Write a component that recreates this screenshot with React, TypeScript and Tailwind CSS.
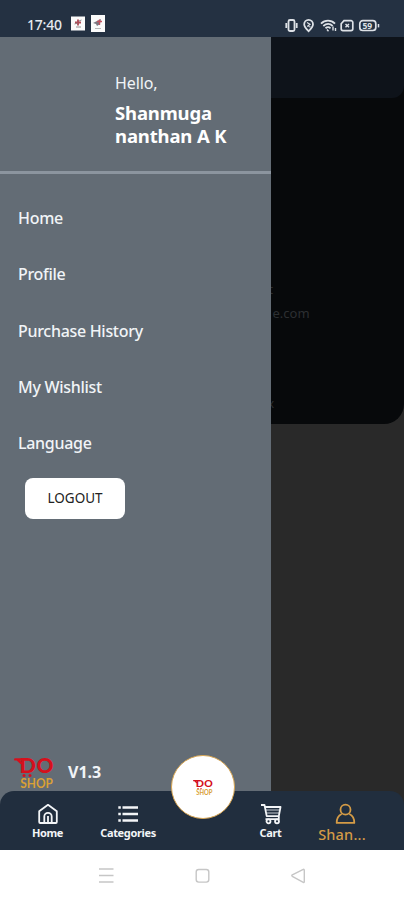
import type { ReactNode } from "react";

const menuItems = ["Home", "Profile", "Purchase History", "My Wishlist", "Language"];

function DoShopLogo({ className }: { className: string }) {
  return (
    <svg viewBox="0 0 40 34" className={`overflow-visible ${className}`} fontFamily="Lato, sans-serif">
      <path d="M1.2 3.4h12M3.5 3.6l3.5 3.4" stroke="#d5101c" strokeWidth="2.4" fill="none" strokeLinecap="round" />
      <text y="16.5" fontSize="20" fontWeight="900" fill="#d5101c">
        <tspan x="5.5" textLength="16.5" lengthAdjust="spacingAndGlyphs">
          D
        </tspan>
        <tspan x="22.5" textLength="17" lengthAdjust="spacingAndGlyphs">
          O
        </tspan>
      </text>
      <circle cx="10" cy="19.5" r="1.5" fill="#d5101c" />
      <circle cx="16" cy="19.5" r="1.5" fill="#d5101c" />
      <text x="6.3" y="31.5" fontSize="13.5" fontWeight="700" fill="#d9a036" textLength="32.5" lengthAdjust="spacingAndGlyphs">
        SHOP
      </text>
    </svg>
  );
}

function StatusBar() {
  return (
    <header className="flex h-[37px] shrink-0 items-end bg-[#243142] pr-6 pb-[3px] pl-[27px] text-[#e6eaf0]">
      <span className="w-[44px] text-[14px] leading-[18px] font-medium tracking-[-0.2px]">17:40</span>
      <svg width="35" height="19" viewBox="0 0 35 19">
        <rect x="0" y="1.5" width="14" height="14" fill="#fbfbfb" />
        <path d="M4 7.5h6M7 4.5v6" stroke="#ad4b57" strokeWidth="1.8" />
        <path d="M3.5 9l3-1M8 6l2.5-1M5 12h5" stroke="#777" strokeWidth="0.8" />
        <rect x="20" y="0" width="14" height="17" fill="#fbfbfb" />
        <path d="M22 8l8-4-1 5-3 2-1-2z" fill="#7b7780" />
        <path d="M26 6.5h5M28.5 4.5V10" stroke="#c45360" strokeWidth="1.3" />
        <path d="M24 13.5h6" stroke="#999" strokeWidth="0.7" />
      </svg>
      <svg width="96" height="15" viewBox="0 0 96 15" className="mb-px ml-auto" fill="none" stroke="#dde1e6" strokeWidth="1.5">
        <rect x="4.5" y="2" width="6" height="11" rx="1.5" strokeWidth="1.8" />
        <path d="M2.3 5v5M12.7 5v5" strokeWidth="1.8" />
        <path d="M24.6 13.2c-2-2.1-4.4-4.3-4.4-7a4.4 4.4 0 0 1 8.8 0c0 2.7-2.4 4.9-4.4 7z" strokeWidth="1.8" />
        <path d="M23 4.5l3 1.8-2.8 2.2M24.5 8.5l2 .5" strokeWidth="1.2" />
        <path d="M37 5.6c4-4 10-4 14 0M39.3 8c3-2.6 6.6-2.6 9.4 0M41.5 10.3c1.6-1.4 3.6-1.4 5 0" strokeWidth="1.8" />
        <path d="M43 11.5l1.5 1.7M49 8.5v4M51.5 10v3" strokeWidth="1.4" />
        <path d="M60 2.7h7a1.8 1.8 0 0 1 1.8 1.8v6.3a1.8 1.8 0 0 1-1.8 1.8h-8a1.8 1.8 0 0 1-1.8-1.8v-5z" strokeWidth="1.7" />
        <path d="M61.5 6l3.5 3.2M65 6l-3.5 3.2" strokeWidth="1.5" />
        <rect x="75.8" y="2.7" width="16" height="9.8" rx="3" strokeWidth="1.7" />
        <path d="M94.5 6v3.4" />
        <text x="78.5" y="10.6" fontSize="8.5" fontWeight="700" fill="#dde1e6" stroke="none">
          59
        </text>
      </svg>
    </header>
  );
}

function Drawer() {
  return (
    <aside className="relative z-10 flex w-[270.5px] shrink-0 flex-col bg-[#636c75] pb-[60px] text-[#f1f4f7]">
      <div className="h-[137px] shrink-0 border-b-3 border-[#8c959f] pt-[35px] pl-[115px]">
        <p className="text-[16px] leading-[22px] tracking-[-0.1px]">Hello,</p>
        <p className="mt-[7px] w-[130px] text-[18.5px] leading-[23px] font-bold tracking-[-0.15px] text-white">
          Shanmuga nanthan A K
        </p>
      </div>
      <nav className="flex flex-col pt-[16px]">
        {menuItems.map((item) => (
          <a key={item} className="flex h-[56.25px] items-center pl-[18px] text-[16px] font-medium tracking-[-0.3px]">
            {item}
          </a>
        ))}
      </nav>
      <button className="mt-[7px] ml-[25px] h-[41px] w-[100px] rounded-lg bg-white pb-0.5 text-[13.5px] text-[#222]">
        LOGOUT
      </button>
      <div className="mt-auto flex items-center pl-[14px]">
        <DoShopLogo className="h-[34px] w-10 shrink-0" />
        <span className="mb-0.5 ml-[14px] text-[16px] leading-6 font-bold">V1.3</span>
      </div>
    </aside>
  );
}

// Dimmed profile page that sits behind the open drawer
function ProfileBackdrop() {
  return (
    <main className="min-w-0 flex-1 bg-[#292929]">
      <div className="h-[387px] rounded-br-[20px] bg-[#07090b] text-[12.5px] leading-[18px] text-[#2c2f32]">
        <div className="h-[61px] rounded-br-[12px] bg-[#0e131a]" />
        <p className="-ml-[2px] pt-[183px]">t</p>
        <p className="mt-[5px] ml-[2px] text-[13px]">e.com</p>
        <p className="-ml-[3px] pt-[73px]">x</p>
      </div>
    </main>
  );
}

interface TabProps {
  label: string;
  icon: ReactNode;
  className: string;
  active?: boolean;
}

function Tab({ label, icon, className, active }: TabProps) {
  return (
    <a className={`flex shrink-0 flex-col items-center pt-[11px] ${active ? "text-[#d49b46]" : "text-[#f3f5f7]"} ${className}`}>
      <svg
        width="24"
        height="24"
        viewBox="0 0 24 24"
        className="overflow-visible"
        fill="none"
        stroke="currentColor"
        strokeWidth="1.8"
        strokeLinejoin="round"
      >
        {icon}
      </svg>
      <span
        className={
          active
            ? "text-[14.5px] leading-[17px] font-medium tracking-[0.2px]"
            : "text-[11px] leading-[13px] font-bold tracking-[-0.35px]"
        }
      >
        {label}
      </span>
    </a>
  );
}

function TabBar() {
  return (
    <nav className="relative z-20 -mt-[59px] flex h-[59px] shrink-0 rounded-t-[14px] bg-[#212e3e]">
      <Tab
        className="w-[95px]"
        label="Home"
        icon={
          <>
            <path d="M3.2 9.3L12 2.8l8.8 6.5V20a1 1 0 0 1-1 1H4.2a1 1 0 0 1-1-1z" />
            <path d="M8.3 21v-6.5a3.7 3.7 0 0 1 7.4 0V21M12 14v7" />
          </>
        }
      />
      <Tab
        className="w-[66px]"
        label="Categories"
        icon={
          <>
            <path d="M6.5 5.5H22M6.5 12H22M6.5 18.5H22" strokeWidth="2.7" />
            <path d="M2.3 5.5h2.5M2.3 12h2.5M2.3 18.5h2.5" strokeWidth="2.4" />
          </>
        }
      />
      <div className="absolute top-[-36px] left-[171px] flex size-[64px] items-center justify-center rounded-full border-[1.5px] border-[#d9a652] bg-white">
        <DoShopLogo className="h-[17px] w-5" />
      </div>
      <Tab
        className="ml-[77px] w-[65px]"
        label="Cart"
        icon={
          <>
            <path d="M2 3h3.5l2.2 11.2h12.1L21.5 5H6M19.8 14.2v3H6.5" />
            <path d="M7 8h13.7M7.3 11h12.9" strokeWidth="0.8" />
            <circle cx="9.5" cy="19.3" r="2" />
            <circle cx="18" cy="19.3" r="2" />
          </>
        }
      />
      <Tab
        active
        className="ml-[4px] w-[70px]"
        label="Shan..."
        icon={
          <>
            <circle cx="15.5" cy="7.7" r="5" />
            <path d="M11.7 12c-3 1.3-5 4.5-5 8.9h17.6c0-4.4-2-7.6-5-8.9" />
          </>
        }
      />
    </nav>
  );
}

function SystemNav() {
  return (
    <footer className="flex h-[50px] shrink-0 items-center justify-center bg-white">
      <svg width="210" height="18" viewBox="0 0 210 18" fill="none" stroke="#c6c6c6" strokeWidth="1.4" strokeLinejoin="round">
        <path d="M2 3h14.5M2 9.5h14.5M2 16h14.5" />
        <rect x="99.2" y="3.5" width="12.6" height="12.6" rx="2.5" />
        <path d="M207.3 4.5v11.3q0 1-1 .5l-11-6q-1-.8 0-1.5l11-5.5q1-.4 1 1.2z" />
      </svg>
    </footer>
  );
}

export default function App() {
  return (
    <div className="flex h-[900px] w-[404px] flex-col overflow-hidden bg-white font-['Noto_Sans',sans-serif]">
      <StatusBar />
      <div className="flex h-[813px] shrink-0">
        <Drawer />
        <ProfileBackdrop />
      </div>
      <TabBar />
      <SystemNav />
    </div>
  );
}
